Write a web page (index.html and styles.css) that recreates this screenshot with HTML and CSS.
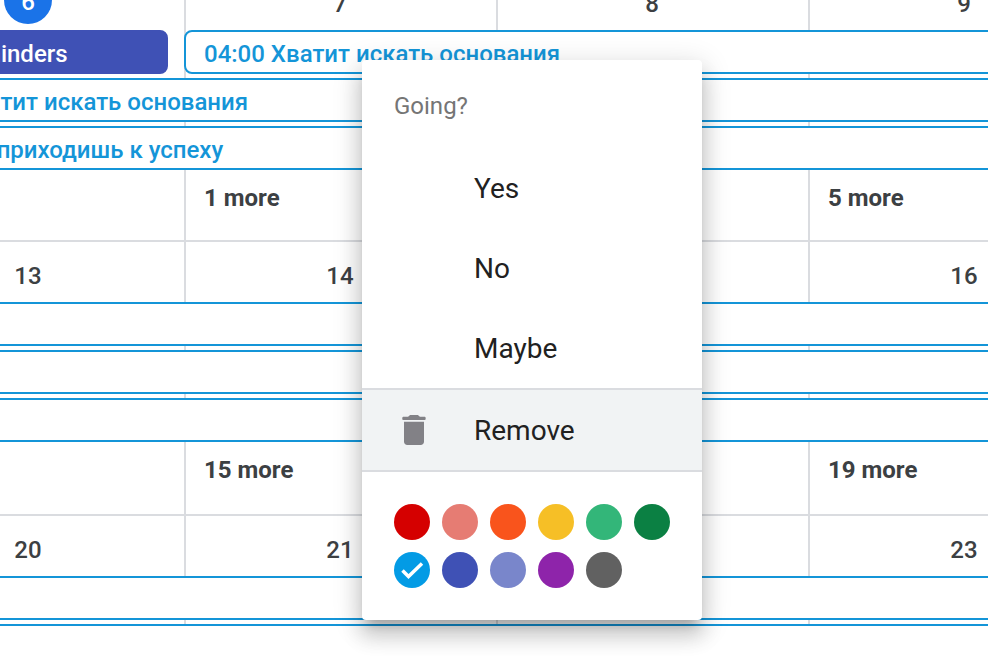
FILE: index.html
```html
<!DOCTYPE html>
<html lang="en">
<head>
  <meta charset="UTF-8" />
  <meta name="viewport" content="width=device-width, initial-scale=1.0" />
  <title>Calendar</title>
  <link rel="stylesheet" href="styles.css">
</head>
<body>
  <main class="calendar">
    <section class="week week-first">
      <div class="cell"></div>
      <div class="cell"></div>
      <div class="cell"></div>
      <div class="cell"></div>

      <div class="day col-1"><span class="today">6</span></div>
      <div class="day col-2">7</div>
      <div class="day col-3">8</div>
      <div class="day col-4">9</div>

      <button class="event reminder">04:00 reminders</button>
      <button class="event from-second">04:00 Хватит искать основания</button>
      <button class="event row-2">04:00 Хватит искать основания</button>
      <button class="event row-3">04:00 Ты приходишь к успеху</button>

      <button class="more col-2">1 more</button>
      <button class="more col-4">5 more</button>
    </section>

    <section class="week">
      <div class="cell"></div>
      <div class="cell"></div>
      <div class="cell"></div>
      <div class="cell"></div>

      <div class="day col-1">13</div>
      <div class="day col-2">14</div>
      <div class="day col-3">15</div>
      <div class="day col-4">16</div>

      <button class="event row-1" aria-label="Event"></button>
      <button class="event row-2" aria-label="Event"></button>
      <button class="event row-3" aria-label="Event"></button>

      <button class="more col-2">15 more</button>
      <button class="more col-4">19 more</button>
    </section>

    <section class="week">
      <div class="cell"></div>
      <div class="cell"></div>
      <div class="cell"></div>
      <div class="cell"></div>

      <div class="day col-1">20</div>
      <div class="day col-2">21</div>
      <div class="day col-3">22</div>
      <div class="day col-4">23</div>

      <button class="event row-1" aria-label="Event"></button>
      <button class="event row-2" aria-label="Event"></button>
    </section>
  </main>

  <!-- Event context menu -->
  <div class="menu">
    <p class="menu-title">Going?</p>
    <button class="menu-item">Yes</button>
    <button class="menu-item">No</button>
    <button class="menu-item">Maybe</button>
    <button class="menu-item remove">
      <svg class="icon" viewBox="0 0 24 24" aria-hidden="true">
        <path d="M6 19c0 1.1.9 2 2 2h8c1.1 0 2-.9 2-2V7H6v12zM18.500 4H15.500c-.6-.7-1-1-1.700-1h-3.600c-.7 0-1.100.3-1.700 1H5.500c-.7 0-.7 2 0 2h13c.7 0 .7-2 0-2z" />
      </svg>
      Remove
    </button>
    <div class="colors">
      <label class="color tomato"><input type="radio" name="color" aria-label="Tomato"></label>
      <label class="color flamingo"><input type="radio" name="color" aria-label="Flamingo"></label>
      <label class="color tangerine"><input type="radio" name="color" aria-label="Tangerine"></label>
      <label class="color banana"><input type="radio" name="color" aria-label="Banana"></label>
      <label class="color sage"><input type="radio" name="color" aria-label="Sage"></label>
      <label class="color basil"><input type="radio" name="color" aria-label="Basil"></label>
      <label class="color peacock">
        <input type="radio" name="color" aria-label="Peacock" checked>
        <svg class="check" viewBox="0 0 36 36" aria-hidden="true">
          <path d="M8.500 18.500l6 6L28 11.500" />
        </svg>
      </label>
      <label class="color blueberry"><input type="radio" name="color" aria-label="Blueberry"></label>
      <label class="color lavender"><input type="radio" name="color" aria-label="Lavender"></label>
      <label class="color grape"><input type="radio" name="color" aria-label="Grape"></label>
      <label class="color graphite"><input type="radio" name="color" aria-label="Graphite"></label>
    </div>
  </div>
</body>
</html>
```

FILE: styles.css
```css
* {
  box-sizing: border-box;
  margin: 0;
  padding: 0;
}

body {
  font-family: Roboto, Arial, sans-serif;
  background-color: #fff;
  color: #3c4043;
  height: 100vh;
  overflow: hidden;
}

button {
  font: inherit;
  color: inherit;
  text-align: left;
  background: none;
  border: none;
  cursor: pointer;
}

.calendar {
  margin: -30px -132px 0 -128px;
  font-size: 24px;
  font-weight: 500;
}

.week {
  display: grid;
  grid-template-columns: repeat(4, 1fr);
  grid-template-rows: 56px 44px 44px 44px 68px;
  row-gap: 4px;
  border-bottom: 2px solid #dadce0;
}

.week-first {
  grid-template-rows: 56px 44px 44px 44px 66px;
}

.cell {
  grid-row: 1 / -1;
  border-left: 2px solid #dadce0;
}

.cell:nth-child(1) { grid-column: 1; }
.cell:nth-child(2) { grid-column: 2; }
.cell:nth-child(3) { grid-column: 3; }
.cell:nth-child(4) { grid-column: 4; }

.col-1 { grid-column: 1; }
.col-2 { grid-column: 2; }
.col-3 { grid-column: 3; }
.col-4 { grid-column: 4; }

.day {
  grid-row: 1;
  padding-top: 6px;
  line-height: 56px;
  text-align: center;
}

.today {
  display: block;
  width: 48px;
  height: 48px;
  margin: 0 auto;
  line-height: 52px;
  color: #fff;
  background-color: #1a73e8;
  border-radius: 50%;
}

.event {
  grid-column: 1 / -1;
  padding: 4px 18px 0;
  line-height: 36px;
  white-space: nowrap;
  color: #1495d8;
  background-color: #fff;
  border: 2px solid #1495d8;
  border-radius: 8px;
}

.row-1 { grid-row: 2; }
.row-2 { grid-row: 3; }
.row-3 { grid-row: 4; }

.reminder {
  grid-row: 2;
  grid-column: 1;
  margin-right: 16px;
  color: #fff;
  background-color: #3f51b5;
  border-color: #3f51b5;
}

.from-second {
  grid-row: 2;
  grid-column: 2 / -1;
}

.more {
  grid-row: 5;
  align-self: start;
  padding: 0 20px;
  line-height: 48px;
  font-weight: 700;
}

.menu {
  position: absolute;
  top: 60px;
  left: 362px;
  width: 340px;
  background-color: #fff;
  border-radius: 4px;
  box-shadow: 0 10px 10px -6px rgba(0, 0, 0, 0.2),
    0 16px 20px 2px rgba(0, 0, 0, 0.14),
    0 6px 28px 4px rgba(0, 0, 0, 0.12);
}

.menu-title {
  padding: 4px 32px 0;
  font-size: 24px;
  line-height: 84px;
  color: #757575;
}

.menu-item {
  display: flex;
  align-items: center;
  width: 100%;
  height: 80px;
  padding-left: 112px;
  font-size: 28px;
  color: #212121;
}

.remove {
  gap: 40px;
  height: 84px;
  padding-left: 32px;
  background-color: #f1f3f4;
  border-top: 2px solid #dadce0;
  border-bottom: 2px solid #dadce0;
}

.icon {
  width: 40px;
  height: 40px;
  fill: #828186;
}

.colors {
  display: grid;
  grid-template-columns: repeat(6, 36px);
  gap: 12px;
  padding: 32px;
}

.color {
  position: relative;
  height: 36px;
  border-radius: 50%;
  cursor: pointer;
}

.color input {
  appearance: none;
  display: block;
  width: 100%;
  height: 100%;
  border-radius: 50%;
}

.check {
  position: absolute;
  inset: 0;
  fill: none;
  stroke: #fff;
  stroke-width: 3.5;
}

.tomato { background-color: #d50000; }
.flamingo { background-color: #e67c73; }
.tangerine { background-color: #f9541c; }
.banana { background-color: #f6bf26; }
.sage { background-color: #33b679; }
.basil { background-color: #0b8043; }
.peacock { background-color: #039be5; }
.blueberry { background-color: #3f51b5; }
.lavender { background-color: #7986cb; }
.grape { background-color: #8e24aa; }
.graphite { background-color: #616161; }
```
